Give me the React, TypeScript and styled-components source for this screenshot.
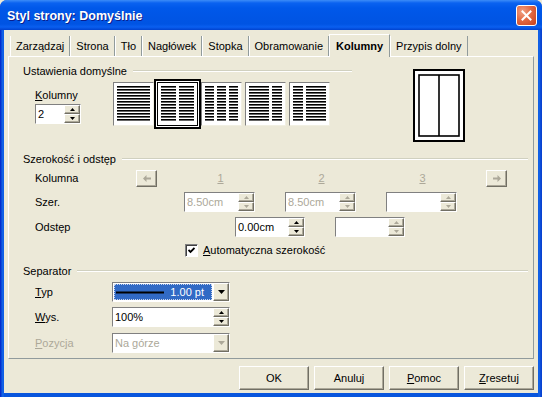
import React from 'react'
import styled, { createGlobalStyle } from 'styled-components'

const GlobalStyle = createGlobalStyle`
  html, body {
    margin: 0;
    padding: 0;
    background: #ece9d8;
  }
  body {
    font-family: "Liberation Sans", Arial, sans-serif;
    font-size: 11px;
    color: #000;
  }
`

const Window = styled.div`
  width: 542px;
  height: 397px;
  display: flex;
  flex-direction: column;
  background: linear-gradient(to right, #0019cf 0, #0842d0 1px, #166aee 3px, #0855dd 4px, #0855dd 538px, #166aee 539px, #0842d0 541px);
  border-radius: 7px 7px 0 0;
  overflow: hidden;
`

const TitleBar = styled.div`
  height: 30px;
  flex: none;
  display: flex;
  align-items: center;
  justify-content: space-between;
  padding: 0 5px 0 7px;
  background: linear-gradient(#3c8cf8 0, #0a62f0 3px, #0058ea 8px, #0055e5 18px, #0054e3 24px, #0a5ff0 27px, #0042cf 30px);
`

const Title = styled.div`
  color: #fff;
  font-weight: 700;
  font-size: 12.5px;
  text-shadow: 1px 1px #0a1e8c;
  padding-top: 1px;
`

const CloseButton = styled.div`
  width: 21px;
  height: 21px;
  box-sizing: border-box;
  border: 1px solid #fff;
  border-radius: 3px;
  background: radial-gradient(circle at 30% 30%, #f0a184 0, #e26a44 45%, #c8401c 100%);
  display: flex;
  align-items: center;
  justify-content: center;
`

const Frame = styled.div`
  flex: 1;
  display: flex;
  flex-direction: column;
  margin: 0 4px 4px;
  padding: 5px 4px 3px;
  background: #ece9d8;
`

const TabStrip = styled.div`
  display: flex;
  align-items: flex-end;
  height: 21px;
  padding-left: 2px;
`

const Tab = styled.div<{ $active?: boolean }>`
  display: flex;
  align-items: center;
  box-sizing: border-box;
  height: ${p => (p.$active ? 23 : 20)}px;
  padding: 0 ${p => (p.$active ? 6 : 5)}px;
  margin-bottom: ${p => (p.$active ? -1 : 0)}px;
  border-left: 1px solid #fff;
  border-right: 1px solid #919b9c;
  border-top: ${p => (p.$active ? '1px solid #fff' : 'none')};
  background: #ece9d8;
  font-weight: ${p => (p.$active ? 700 : 400)};
  position: relative;
  z-index: ${p => (p.$active ? 1 : 0)};
`

const Panel = styled.div`
  box-sizing: border-box;
  height: 303px;
  border: 1px solid;
  border-color: #fff #919b9c #919b9c #fff;
  padding: 7px 5px 0 14px;
  display: flex;
  flex-direction: column;
`

const Legend = styled.div<{ $mt?: number }>`
  display: flex;
  align-items: center;
  gap: 6px;
  height: 13px;
  margin-top: ${p => p.$mt ?? 0}px;
  white-space: nowrap;

  &::after {
    content: '';
    flex: 1;
    border-top: 1px solid #d0d0bf;
    border-bottom: 1px solid #fff;
  }
`

const TopSection = styled.div`
  display: flex;
  height: 77px;
`

const DefaultsBlock = styled.div`
  width: 329px;
  display: flex;
  flex-direction: column;
`

const DefaultsBody = styled.div`
  display: flex;
  margin-top: 5px;
`

const CountGroup = styled.div`
  width: 90px;
  box-sizing: border-box;
  padding: 7px 0 0 12px;
  display: flex;
  flex-direction: column;
  gap: 2px;
`

const PresetRow = styled.div`
  display: flex;
  gap: 3px;
`

const PresetBox = styled.div<{ $selected?: boolean }>`
  width: 41px;
  height: 44px;
  box-sizing: border-box;
  border: 1px solid;
  border-color: ${p => (p.$selected ? '#000' : '#808080 #f1efe2 #f1efe2 #808080')};
  box-shadow: ${p => (p.$selected ? '0 0 0 1px #fff, 0 0 0 3px #000' : 'none')};
  background: #fff;
  display: flex;
`

const Preview = styled.div`
  margin: 5px 0 0 61px;
  width: 52px;
  height: 73px;
  display: flex;
`

const Row = styled.div<{ $mt: number; $h?: number }>`
  display: flex;
  align-items: center;
  height: ${p => p.$h ?? 20}px;
  margin-top: ${p => p.$mt}px;
  padding-left: 12px;
`

const RowLabel = styled.div<{ $w: number; $disabled?: boolean }>`
  width: ${p => p.$w}px;
  flex: none;
  color: ${p => (p.$disabled ? '#aca899' : '#000')};
`

const FieldLabel = styled.div`
  height: 13px;
  line-height: 13px;
`

const Key = styled.span`
  text-decoration: underline;
`

const Cells = styled.div`
  display: flex;
  gap: 30px;
  margin: 0 28px 0 28px;
`

const NumberCell = styled.div`
  width: 71px;
  text-align: center;
  color: #aca899;
  text-decoration: underline;
`

const Fields = styled.div<{ $gap: number }>`
  display: flex;
  gap: ${p => p.$gap}px;
`

const RaisedButton = styled.div`
  box-sizing: border-box;
  border: 1px solid;
  border-color: #fff #716f64 #716f64 #fff;
  box-shadow: inset -1px -1px #aca899;
  background: #ece9d8;
  display: flex;
  align-items: center;
  justify-content: center;
`

const ArrowButton = styled(RaisedButton)`
  width: 21px;
  height: 17px;
  flex: none;
`

const SpinBox = styled.div<{ $w: number }>`
  width: ${p => p.$w}px;
  height: 20px;
  box-sizing: border-box;
  display: flex;
  border: 1px solid;
  border-color: #808080 #fff #fff #808080;
  background: #fff;
`

const FieldText = styled.div<{ $disabled?: boolean }>`
  flex: 1;
  display: flex;
  align-items: center;
  padding-left: 2px;
  color: ${p => (p.$disabled ? '#aca899' : '#000')};
  overflow: hidden;
  white-space: nowrap;
`

const Spinner = styled.div`
  width: 16px;
  display: flex;
  flex-direction: column;
`

const SpinHalf = styled(RaisedButton)`
  flex: 1;
`

const CheckRow = styled.div`
  display: flex;
  align-items: center;
  gap: 5px;
  margin-left: 150px;
`

const CheckBox = styled.div`
  width: 13px;
  height: 13px;
  box-sizing: border-box;
  border: 1px solid;
  border-color: #808080 #fff #fff #808080;
  box-shadow: inset 1px 1px #404040;
  background: #fff;
  display: flex;
  align-items: center;
  justify-content: center;
`

const Combo = styled.div`
  width: 118px;
  height: 20px;
  box-sizing: border-box;
  display: flex;
  border: 1px solid;
  border-color: #808080 #fff #fff #808080;
  background: #fff;
`

const ComboSelected = styled.div`
  flex: 1;
  display: flex;
  align-items: center;
  justify-content: space-between;
  margin: 1px;
  padding: 0 8px 0 2px;
  background: #316ac5;
  outline: 1px dotted #c8d4ec;
  outline-offset: -1px;
  color: #fff;
`

const DropButton = styled(RaisedButton)`
  width: 16px;
  flex: none;
`

const Footer = styled.div`
  display: flex;
  justify-content: flex-end;
  gap: 5px;
  margin-top: 7px;
`

const DialogButton = styled(RaisedButton)`
  width: 70px;
  height: 24px;
  box-shadow: inset -1px -1px #aca899, 0 0 0 0 #000;
`

const Up = ({ c = '#000' }: { c?: string }) => (
  <svg width="5" height="3" viewBox="0 0 5 3"><path d="M0 3 L2.5 0 L5 3 Z" fill={c} /></svg>
)
const Down = ({ c = '#000', w = 5 }: { c?: string; w?: number }) => (
  <svg width={w} height={w / 2 + 0.5} viewBox={`0 0 ${w} ${w / 2 + 0.5}`}>
    <path d={`M0 0 L${w} 0 L${w / 2} ${w / 2 + 0.5} Z`} fill={c} />
  </svg>
)

const Spin = ({ w, value, disabled }: { w: number; value?: string; disabled?: boolean }) => (
  <SpinBox $w={w}>
    <FieldText $disabled={disabled}>{value}</FieldText>
    <Spinner>
      <SpinHalf><Up c={disabled ? '#aca899' : '#000'} /></SpinHalf>
      <SpinHalf><Down c={disabled ? '#aca899' : '#000'} /></SpinHalf>
    </Spinner>
  </SpinBox>
)

const PRESETS: [number, number][][] = [
  [[3, 33]],
  [[3, 15], [21, 15]],
  [[3, 9], [15, 9], [27, 9]],
  [[3, 20], [26, 10]],
  [[3, 10], [16, 20]],
]

const PresetIcon = ({ cols }: { cols: [number, number][] }) => (
  <svg width="39" height="42" viewBox="0 0 39 42">
    {cols.map(([x, w]) =>
      Array.from({ length: 12 }, (_, i) => (
        <rect key={`${x}-${i}`} x={x} y={3 + i * 3} width={w} height={1.6} fill="#000" />
      ))
    )}
  </svg>
)

const tabs = ['Zarządzaj', 'Strona', 'Tło', 'Nagłówek', 'Stopka', 'Obramowanie', 'Kolumny', 'Przypis dolny']

export default function App() {
  return (
    <>
      <GlobalStyle />
      <Window>
        <TitleBar>
          <Title>Styl strony: Domyślnie</Title>
          <CloseButton>
            <svg width="11" height="11" viewBox="0 0 11 11">
              <path d="M1.5 1.5 L9.5 9.5 M9.5 1.5 L1.5 9.5" stroke="#fff" strokeWidth="2" strokeLinecap="square" />
            </svg>
          </CloseButton>
        </TitleBar>
        <Frame>
          <TabStrip>
            {tabs.map(t => (
              <Tab key={t} $active={t === 'Kolumny'}>{t}</Tab>
            ))}
          </TabStrip>
          <Panel>
            <TopSection>
              <DefaultsBlock>
                <Legend>Ustawienia domyślne</Legend>
                <DefaultsBody>
                  <CountGroup>
                    <FieldLabel><Key>K</Key>olumny</FieldLabel>
                    <Spin w={46} value="2" />
                  </CountGroup>
                  <PresetRow>
                    {PRESETS.map((cols, i) => (
                      <PresetBox key={i} $selected={i === 1}>
                        <PresetIcon cols={cols} />
                      </PresetBox>
                    ))}
                  </PresetRow>
                </DefaultsBody>
              </DefaultsBlock>
              <Preview>
                <svg width="52" height="73" viewBox="0 0 52 73">
                  <rect x="1" y="1" width="50" height="71" fill="#fff" stroke="#000" strokeWidth="2" />
                  <rect x="6" y="6" width="40" height="61" fill="#fff" stroke="#000" strokeWidth="1.6" />
                  <path d="M26 6 V67" stroke="#000" strokeWidth="1.6" />
                </svg>
              </Preview>
            </TopSection>

            <Legend $mt={11}>Szerokość i odstęp</Legend>
            <Row $mt={3}>
              <RowLabel $w={101}>Kolumna</RowLabel>
              <ArrowButton>
                <svg width="8" height="7" viewBox="0 0 8 7"><path d="M0 3.5 L3.5 0 V2.5 H8 V4.5 H3.5 V7 Z" fill="#aca899" /></svg>
              </ArrowButton>
              <Cells>
                <NumberCell>1</NumberCell>
                <NumberCell>2</NumberCell>
                <NumberCell>3</NumberCell>
              </Cells>
              <ArrowButton>
                <svg width="8" height="7" viewBox="0 0 8 7"><path d="M8 3.5 L4.5 0 V2.5 H0 V4.5 H4.5 V7 Z" fill="#aca899" /></svg>
              </ArrowButton>
            </Row>
            <Row $mt={4}>
              <RowLabel $w={149}>Szer.</RowLabel>
              <Fields $gap={30}>
                <Spin w={71} value="8.50cm" disabled />
                <Spin w={71} value="8.50cm" disabled />
                <Spin w={71} disabled />
              </Fields>
            </Row>
            <Row $mt={5}>
              <RowLabel $w={200}>Odstęp</RowLabel>
              <Fields $gap={30}>
                <Spin w={70} value="0.00cm" />
                <Spin w={70} disabled />
              </Fields>
            </Row>
            <Row $mt={6} $h={14}>
              <CheckRow>
                <CheckBox>
                  <svg width="7" height="7" viewBox="0 0 7 7"><path d="M0.5 3 L2.5 5 L6.5 1" stroke="#000" strokeWidth="1.8" fill="none" /></svg>
                </CheckBox>
                <span><Key>A</Key>utomatyczna szerokość</span>
              </CheckRow>
            </Row>

            <Legend $mt={7}>Separator</Legend>
            <Row $mt={5}>
              <RowLabel $w={77}><Key>T</Key>yp</RowLabel>
              <Combo>
                <ComboSelected>
                  <svg width="48" height="3" viewBox="0 0 48 3"><rect x="0" y="0.5" width="48" height="2" fill="#000" /></svg>
                  <span>1.00 pt</span>
                </ComboSelected>
                <DropButton><Down w={7} /></DropButton>
              </Combo>
            </Row>
            <Row $mt={5}>
              <RowLabel $w={77}><Key>W</Key>ys.</RowLabel>
              <Spin w={118} value="100%" />
            </Row>
            <Row $mt={6}>
              <RowLabel $w={77} $disabled><Key>P</Key>ozycja</RowLabel>
              <Combo>
                <FieldText $disabled>Na górze</FieldText>
                <DropButton><Down w={7} c="#aca899" /></DropButton>
              </Combo>
            </Row>
          </Panel>
          <Footer>
            <DialogButton>OK</DialogButton>
            <DialogButton>Anuluj</DialogButton>
            <DialogButton><span><Key>P</Key>omoc</span></DialogButton>
            <DialogButton><span><Key>Z</Key>resetuj</span></DialogButton>
          </Footer>
        </Frame>
      </Window>
    </>
  )
}
